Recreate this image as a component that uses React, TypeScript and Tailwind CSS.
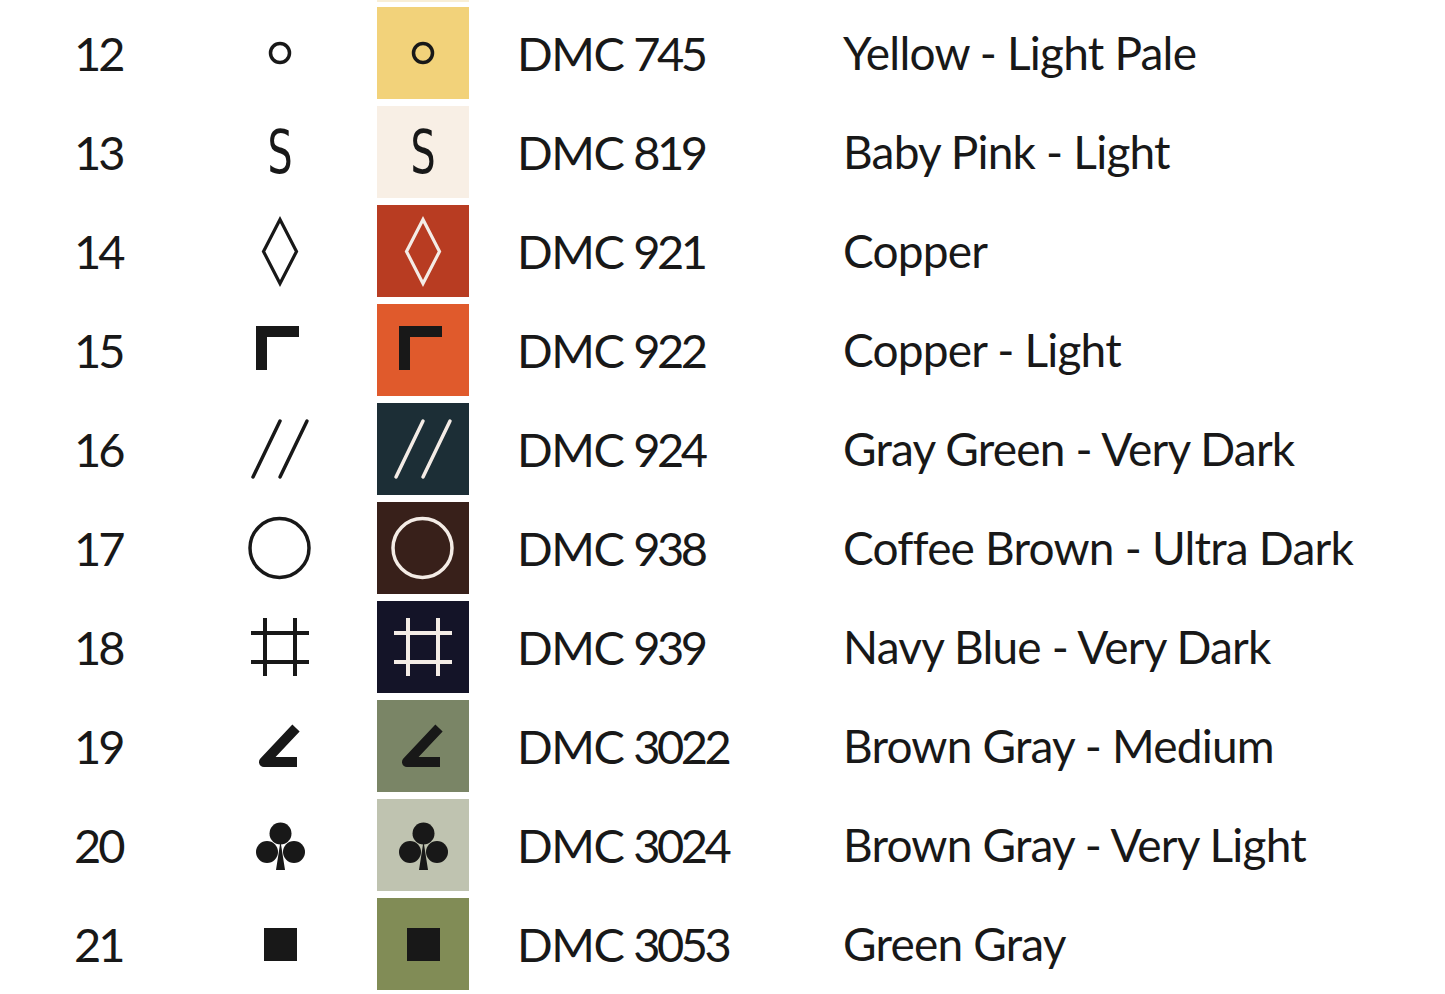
import React from 'react';

type Row = {
   no: number;
   dmc: string;
   name: string;
   bg: string;
   ink: 'dark' | 'light';
   symbol: string;
};

const rows: Row[] = [
   { no: 12, dmc: '745', name: 'Yellow - Light Pale', bg: 'bg-[#f2d27a]', ink: 'dark', symbol: 'ring' },
   { no: 13, dmc: '819', name: 'Baby Pink - Light', bg: 'bg-[#f8efe5]', ink: 'dark', symbol: 's' },
   { no: 14, dmc: '921', name: 'Copper', bg: 'bg-[#b83c22]', ink: 'light', symbol: 'diamond' },
   { no: 15, dmc: '922', name: 'Copper - Light', bg: 'bg-[#e05a2c]', ink: 'dark', symbol: 'corner' },
   { no: 16, dmc: '924', name: 'Gray Green - Very Dark', bg: 'bg-[#1c2e36]', ink: 'light', symbol: 'slashes' },
   { no: 17, dmc: '938', name: 'Coffee Brown - Ultra Dark', bg: 'bg-[#38201a]', ink: 'light', symbol: 'circle' },
   { no: 18, dmc: '939', name: 'Navy Blue - Very Dark', bg: 'bg-[#141428]', ink: 'light', symbol: 'hash' },
   { no: 19, dmc: '3022', name: 'Brown Gray - Medium', bg: 'bg-[#7a8566]', ink: 'dark', symbol: 'angle' },
   { no: 20, dmc: '3024', name: 'Brown Gray - Very Light', bg: 'bg-[#bfc3b0]', ink: 'dark', symbol: 'club' },
   { no: 21, dmc: '3053', name: 'Green Gray', bg: 'bg-[#818c56]', ink: 'dark', symbol: 'square' },
];

const Symbol: React.FC<{ kind: string; color: string }> = ({ kind, color }) => {
   if (kind === 's') {
      return (
         <div className="w-[92px] h-[92px] flex items-center justify-center">
            <span
               className="block text-[60px] leading-none scale-x-[0.66] font-normal"
               style={{ color, fontFamily: '"DejaVu Sans", sans-serif' }}
            >
               S
            </span>
         </div>
      );
   }
   return (
      <svg width="92" height="92" viewBox="0 0 92 92" fill="none">
         {kind === 'ring' && <circle cx="46" cy="46" r="9.5" stroke={color} strokeWidth="3.5" />}
         {kind === 'diamond' && <polygon points="46,14.5 62.5,46.5 46,78.5 29.5,46.5" stroke={color} strokeWidth="3.2" strokeLinejoin="miter" />}
         {kind === 'corner' && <polygon points="22,22 65,22 65,33 33,33 33,66 22,66" fill={color} />}
         {kind === 'slashes' && (
            <g stroke={color} strokeWidth="3.5" strokeLinecap="round">
               <line x1="46" y1="18" x2="19" y2="74" />
               <line x1="73" y1="18" x2="46" y2="74" />
            </g>
         )}
         {kind === 'circle' && <circle cx="45.5" cy="46" r="29.5" stroke={color} strokeWidth="3.5" />}
         {kind === 'hash' && (
            <g stroke={color} strokeWidth="4">
               <line x1="31" y1="17" x2="31" y2="75" />
               <line x1="61" y1="17" x2="61" y2="75" />
               <line x1="17" y1="32" x2="75" y2="32" />
               <line x1="17" y1="61" x2="75" y2="61" />
            </g>
         )}
         {kind === 'angle' && (
            <path d="M62 28 L30 62 L63 62" fill="none" stroke={color} strokeWidth="10" strokeLinejoin="round" strokeLinecap="butt" />
         )}
         {kind === 'club' && (
            <g fill={color}>
               <circle cx="46.5" cy="34.5" r="11" />
               <circle cx="33" cy="53" r="11" />
               <circle cx="60" cy="53" r="11" />
               <polygon points="46.5,42 42,71 51,71" />
            </g>
         )}
         {kind === 'square' && <rect x="30" y="30" width="33" height="33" fill={color} />}
      </svg>
   );
};

export default function App() {
   return (
      <div
         className="w-[1445px] h-[994px] bg-white overflow-hidden text-[#181818]"
         style={{ fontFamily: 'Lato, "Noto Sans", sans-serif' }}
      >
         <div className="ml-[377px] w-[92px] h-[2px] bg-[#f8eed5]" />
         <div className="mt-[5px] flex flex-col gap-[7px]">
            {rows.map(row => (
               <div key={row.no} className="flex items-center h-[92px]">
                  <div className="w-[234px] pl-[74px] text-[47px] leading-none tracking-[-3px]">{row.no}</div>
                  <Symbol kind={row.symbol} color="#181818" />
                  <div className={`ml-[51px] w-[92px] h-[92px] ${row.bg}`}>
                     <Symbol kind={row.symbol} color={row.ink === 'light' ? '#f4ece6' : '#181818'} />
                  </div>
                  <div className="ml-[48px] w-[326px] flex items-baseline gap-[10px] text-[47px] leading-none">
                     <span className="tracking-[-1.5px]">DMC</span>
                     <span className="tracking-[-3.5px]">{row.dmc}</span>
                  </div>
                  <div className="text-[46px] leading-none tracking-[-0.8px] whitespace-nowrap">{row.name}</div>
               </div>
            ))}
         </div>
      </div>
   );
}
